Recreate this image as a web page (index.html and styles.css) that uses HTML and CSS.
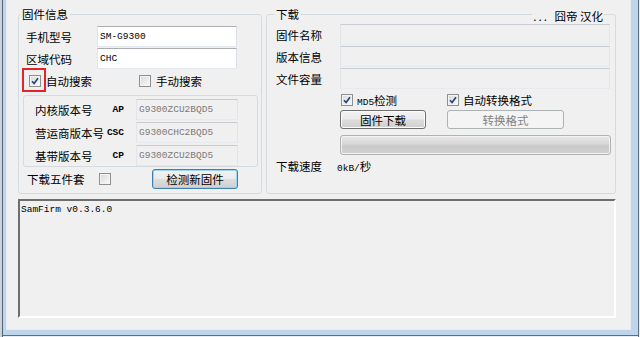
FILE: index.html
```html
<!DOCTYPE html>
<html lang="zh-CN">
<head>
    <meta charset="UTF-8">
    <title>SamFirm</title>
    <link rel="stylesheet" href="styles.css">
</head>
<body>

<div class="frame">
    <div class="client">
        <div class="top">
            <fieldset class="group group-info">
                <legend>固件信息</legend>

                <div class="field">
                    <label>手机型号</label>
                    <input type="text" class="text" value="SM-G9300">
                </div>
                <div class="field">
                    <label>区域代码</label>
                    <input type="text" class="text" value="CHC">
                </div>

                <div class="check-row">
                    <span class="opt opt-auto">
                        <span class="check"><svg width="8" height="8" viewBox="0 0 8 8"><path d="M1 4.2 L3.1 6.5 L7 1.3" fill="none" stroke="#24407a" stroke-width="1.6"/></svg></span>
                        自动搜索
                    </span>
                    <span class="opt">
                        <span class="check"></span>
                        手动搜索
                    </span>
                    <span class="mark"></span>
                </div>

                <div class="versions">
                    <span class="vlabel">内核版本号</span>
                    <span class="code">AP</span>
                    <input type="text" class="text readonly" value="G9300ZCU2BQD5" readonly>

                    <span class="vlabel">营运商版本号</span>
                    <span class="code">CSC</span>
                    <input type="text" class="text readonly" value="G9300CHC2BQD5" readonly>

                    <span class="vlabel">基带版本号</span>
                    <span class="code">CP</span>
                    <input type="text" class="text readonly" value="G9300ZCU2BQD5" readonly>
                </div>

                <div class="bottom-row">
                    <span class="bottom-label">下载五件套</span>
                    <span class="check"></span>
                    <button class="btn btn-default">检测新固件</button>
                </div>
            </fieldset>

            <fieldset class="group group-download">
                <legend>下载</legend>
                <span class="credit"><span class="dots">...</span> 囧帝 汉化</span>

                <div class="field">
                    <label>固件名称</label>
                    <input type="text" class="text readonly" readonly>
                </div>
                <div class="field">
                    <label>版本信息</label>
                    <input type="text" class="text readonly" readonly>
                </div>
                <div class="field">
                    <label>文件容量</label>
                    <input type="text" class="text readonly" readonly>
                </div>

                <div class="check-row">
                    <span class="opt">
                        <span class="check"><svg width="8" height="8" viewBox="0 0 8 8"><path d="M1 4.2 L3.1 6.5 L7 1.3" fill="none" stroke="#24407a" stroke-width="1.6"/></svg></span>
                        <span><span class="mono">MD5</span>检测</span>
                    </span>
                    <span class="opt">
                        <span class="check"><svg width="8" height="8" viewBox="0 0 8 8"><path d="M1 4.2 L3.1 6.5 L7 1.3" fill="none" stroke="#24407a" stroke-width="1.6"/></svg></span>
                        自动转换格式
                    </span>
                </div>

                <div class="btn-row">
                    <button class="btn btn-download">固件下载</button>
                    <button class="btn btn-convert" disabled>转换格式</button>
                </div>

                <div class="progress"></div>

                <div class="speed-row">
                    <span class="speed-label">下载速度</span>
                    <span><span class="mono">0kB/</span>秒</span>
                </div>
            </fieldset>
        </div>

        <div class="log">SamFirm v0.3.6.0</div>
    </div>
</div>

</body>
</html>
```

FILE: styles.css
```css
body {
    margin: 0;
    font-family: "Noto Sans CJK SC", "Noto Sans", sans-serif;
    font-size: 11.5px;
    color: #000;
}

/* window border (left, right, bottom) */
.frame {
    width: 640px;
    height: 337px;
    box-sizing: border-box;
    padding: 0 10px 8px 7px;
    background: #bfd5ec;
    box-shadow:
        inset 2px 0 0 #c9d3dd,
        inset 3px 0 0 #56636f,
        inset -1px 0 0 #e6eef6,
        inset -2px 0 0 #5f6e7e,
        inset 0 -1px 0 #e6eef6,
        inset 0 -2px 0 #5f6e7e;
}

.client {
    height: 100%;
    box-sizing: border-box;
    background: #f0f0f0;
    box-shadow: 0 0 0 1px #e3ebf4;
    padding: 6px 14px 11px 11px;
    display: flex;
    flex-direction: column;
    gap: 5px;
}

.top {
    display: flex;
    gap: 4px;
    height: 188px;
}

.group {
    margin: 0;
    border: 1px solid #d3dbe0;
    border-radius: 3px;
    box-sizing: border-box;
    min-width: 0;
    position: relative;
}

.group legend {
    padding: 0 2px;
    margin-left: -3px;
    line-height: 16px;
}

.group-info {
    width: 244px;
    padding: 4px 3px 0 4px;
}

.group-download {
    width: 350px;
    padding: 2px 4px 0 9px;
}

.group-download legend {
    margin-left: -2px;
}

.credit {
    position: absolute;
    top: -14px;
    right: 11px;
    line-height: 16px;
    padding: 0 1px;
    background: #f0f0f0;
}

.credit .dots {
    letter-spacing: 2px;
    margin-right: 3px;
}

.field {
    display: grid;
    grid-template-columns: 71px 140px;
    align-items: center;
    height: 21px;
    margin-bottom: 1px;
    padding-left: 3px;
}

.group-download .field {
    grid-template-columns: 64px 270px;
    padding-left: 0;
}

.text {
    box-sizing: border-box;
    width: 100%;
    height: 21px;
    margin: 0;
    padding: 0 2px;
    border: 1px solid;
    border-color: #abadb3 #dbdfe6 #e3e9ef #e2e3ea;
    background: #fff;
    font-family: "Liberation Mono", monospace;
    font-size: 9.5px;
    color: #000;
    outline: none;
}

.text.readonly {
    background: #f0f0f0;
    color: #7a7a7a;
    border-color: #c8ccd2 #e2e5ea #e6eaee #e2e4ea;
}

.mono {
    font-family: "Liberation Mono", monospace;
    font-size: 9.5px;
}

/* checkboxes */
.check-row {
    display: flex;
    align-items: center;
    height: 21px;
    padding-left: 6px;
    position: relative;
}

.group-download .check-row {
    height: 20px;
    padding-left: 65px;
    margin-top: 1px;
}

.opt {
    display: flex;
    align-items: center;
    gap: 5px;
    width: 110px;
}

.group-download .opt {
    width: 106px;
    gap: 4px;
}

.check {
    width: 12px;
    height: 12px;
    box-sizing: border-box;
    border: 1px solid #8e8f8f;
    background: linear-gradient(135deg, #d8d8d8, #fbfbfb);
    box-shadow: inset 0 0 0 1px #f4f4f4;
    display: inline-flex;
    align-items: center;
    justify-content: center;
    flex: none;
}

.mark {
    position: absolute;
    left: -1px;
    top: -2px;
    width: 24px;
    height: 24px;
    box-sizing: border-box;
    border: 2px solid #e0262a;
}

/* version panel */
.versions {
    margin-top: 4px;
    width: 235px;
    box-sizing: border-box;
    border: 1px solid #d3dbe0;
    border-radius: 3px;
    padding: 3px 0 0 11px;
    display: grid;
    grid-template-columns: 70px 31px 102px;
    grid-auto-rows: 21px;
    row-gap: 2px;
    align-items: center;
}

.code {
    font-family: "Liberation Mono", monospace;
    font-weight: bold;
    font-size: 9.5px;
    text-align: right;
    padding-right: 12px;
}

.bottom-row {
    display: flex;
    align-items: center;
    height: 21px;
    margin-top: 1px;
    padding-left: 4px;
}

.bottom-label {
    width: 72px;
}

/* buttons */
.btn {
    font: inherit;
    color: #000;
    height: 19px;
    padding: 0;
    line-height: 16px;
    border: 1px solid #707070;
    border-radius: 3px;
    background: linear-gradient(#f2f2f2 0%, #ebebeb 48%, #dddddd 52%, #cfcfcf 100%);
    box-shadow: inset 0 0 0 1px #fbfbfb;
}

.btn-default {
    width: 86px;
    height: 20px;
    margin-left: 41px;
    border-color: #3c7fb1;
    box-shadow: inset 0 0 0 1px #9fd3f0;
}

.btn-row {
    display: flex;
    gap: 21px;
    padding-left: 64px;
}

.btn-download {
    width: 86px;
}

.btn-convert {
    width: 117px;
    color: #838383;
    border-color: #adb2b5;
    background: #f4f4f4;
    box-shadow: none;
}

.progress {
    margin: 6px 0 0 64px;
    width: 271px;
    height: 20px;
    box-sizing: border-box;
    border: 1px solid #b2b2b2;
    border-radius: 3px;
    background: linear-gradient(#e9e9e9, #d6d6d6 45%, #c9c9c9 55%, #d3d3d3);
    box-shadow: inset 0 0 0 1px #f2f2f2;
}

.speed-row {
    display: flex;
    align-items: center;
    height: 14px;
    margin-top: 4px;
}

.speed-label {
    width: 61px;
}

/* log output */
.log {
    flex: 1;
    border: 2px solid;
    border-color: #6e6e6e #ffffff #ffffff #6e6e6e;
    background: #f0f0f0;
    padding: 3px 1px;
    font-family: "Liberation Mono", monospace;
    font-size: 9.5px;
    line-height: 12px;
}
```
